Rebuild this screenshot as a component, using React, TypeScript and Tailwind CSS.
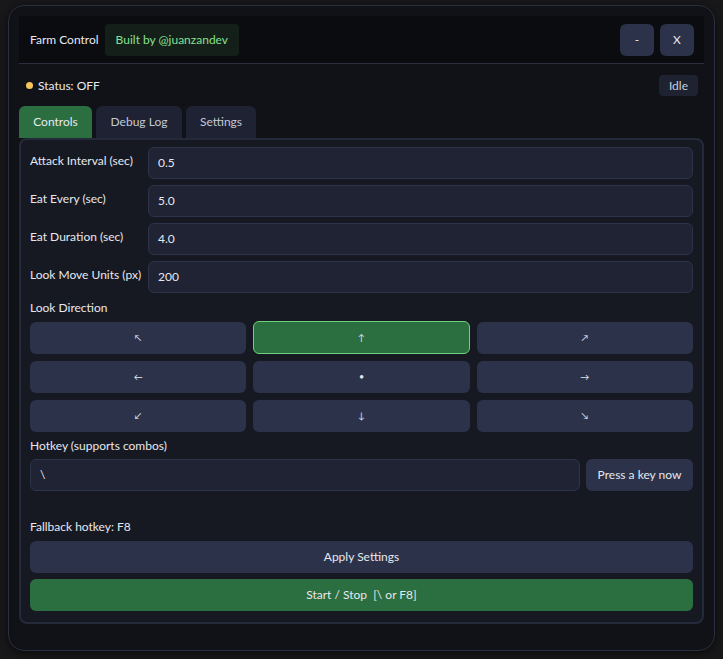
import React from "react";

const font = { fontFamily: '"Segoe UI", Lato, "Noto Sans", sans-serif' };

function Field({ label, value }: { label: string; value: string }) {
  return (
    <div className="flex items-center gap-[5px]">
      <div className="w-[113px] shrink-0 text-[12px] text-[#e6e8ef] leading-none -mt-[5px]">{label}</div>
      <div className="flex-1 h-[32px] rounded-[6px] border border-[#2d3348] bg-[#1f2333] px-[9px] flex items-center text-[12px] text-[#e6e8ef]">
        {value}
      </div>
    </div>
  );
}

function Dir({ g, active }: { g: string; active?: boolean }) {
  return (
    <div
      className={
        active
          ? "h-[33px] rounded-[6px] border border-[#6fd07f] bg-[#2b6e3f] flex items-center justify-center text-[9px] text-[#e6e8ef]"
          : "h-[32px] rounded-[6px] bg-[#2b3249] flex items-center justify-center text-[9px] text-[#e6e8ef]"
      }
    >
      {g}
    </div>
  );
}

export default function App() {
  return (
    <div className="w-[723px] h-[659px] bg-[#18181a] pt-[5px] pl-[8px] pr-[8px]" style={font}>
      <div className="h-[646px] rounded-[16px] border border-[#2a2e3e] bg-[#111217] pt-[10px] px-[10px] shadow-[0_2px_8px_rgba(0,0,0,0.6)]">
        <div className="h-[48px] bg-[#0b0c10] border-b border-[#2a2e3e] flex items-center px-[11px]">
          <span className="text-[12px] text-[#e8eaf0]">Farm Control</span>
          <span className="ml-[6px] h-[32px] px-[11px] rounded-[4px] bg-[#151f19] text-[#86e08f] text-[12px] flex items-center">
            Built by @juanzandev
          </span>
          <div className="ml-auto flex gap-[6px] mr-[-1px]">
            <div className="w-[34px] h-[32px] rounded-[6px] bg-[#2b3249] text-[#e6e8ef] text-[12px] flex items-center justify-center">-</div>
            <div className="w-[34px] h-[32px] rounded-[6px] bg-[#2b3249] text-[#e6e8ef] text-[12px] flex items-center justify-center">X</div>
          </div>
        </div>
        <div className="flex items-center h-[42px] pl-[7px] pr-[6px] pt-[1px]">
          <span className="w-[7px] h-[7px] rounded-full bg-[#f6c35c]"></span>
          <span className="ml-[5px] text-[12px] text-[#e8eaf0]">Status: OFF</span>
          <span className="ml-auto h-[21px] px-[10px] rounded-[4px] bg-[#1e2231] text-[12px] text-[#c9cedb] flex items-center">Idle</span>
        </div>
        <div className="flex gap-[4px] h-[32px]">
          <div className="w-[73px] rounded-t-[6px] bg-[#2b6e3f] text-[12px] text-[#e8eaf0] flex items-center justify-center">Controls</div>
          <div className="w-[86px] rounded-t-[6px] bg-[#1e2232] text-[12px] text-[#c4c9d6] flex items-center justify-center">Debug Log</div>
          <div className="w-[70px] rounded-t-[6px] bg-[#1e2232] text-[12px] text-[#c4c9d6] flex items-center justify-center">Settings</div>
        </div>
        <div className="h-[486px] rounded-[8px] border-2 border-[#252a3b] bg-[#171922] px-[9px] pt-[7px] flex flex-col">
          <div className="flex flex-col gap-[6px]">
            <Field label="Attack Interval (sec)" value="0.5" />
            <Field label="Eat Every (sec)" value="5.0" />
            <Field label="Eat Duration (sec)" value="4.0" />
            <Field label="Look Move Units (px)" value="200" />
          </div>
          <div className="mt-[6px] text-[12px] text-[#e6e8ef] h-[17px] leading-[17px]">Look Direction</div>
          <div className="mt-[5px] grid grid-cols-3 gap-x-[7px] gap-y-[7px] items-center">
            <Dir g="↖" />
            <Dir g="↑" active />
            <Dir g="↗" />
            <Dir g="←" />
            <Dir g="•" />
            <Dir g="→" />
            <Dir g="↙" />
            <Dir g="↓" />
            <Dir g="↘" />
          </div>
          <div className="mt-[5px] text-[12px] text-[#e6e8ef] h-[17px] leading-[17px]">Hotkey (supports combos)</div>
          <div className="mt-[5px] flex gap-[6px]">
            <div className="flex-1 h-[32px] rounded-[6px] border border-[#2d3348] bg-[#1f2333] px-[9px] flex items-center text-[12px] text-[#e6e8ef]">\</div>
            <div className="w-[107px] h-[32px] rounded-[6px] bg-[#2b3249] text-[12px] text-[#e6e8ef] flex items-center justify-center">Press a key now</div>
          </div>
          <div className="mt-[27px] text-[12px] text-[#e6e8ef] h-[17px] leading-[17px]">Fallback hotkey: F8</div>
          <div className="mt-[6px] h-[32px] rounded-[6px] bg-[#2b3249] text-[12px] text-[#e6e8ef] flex items-center justify-center">Apply Settings</div>
          <div className="mt-[6px] h-[32px] rounded-[6px] bg-[#2b6e3f] text-[12px] text-[#e6e8ef] flex items-center justify-center whitespace-pre">Start / Stop  [\ or F8]</div>
        </div>
      </div>
    </div>
  );
}
